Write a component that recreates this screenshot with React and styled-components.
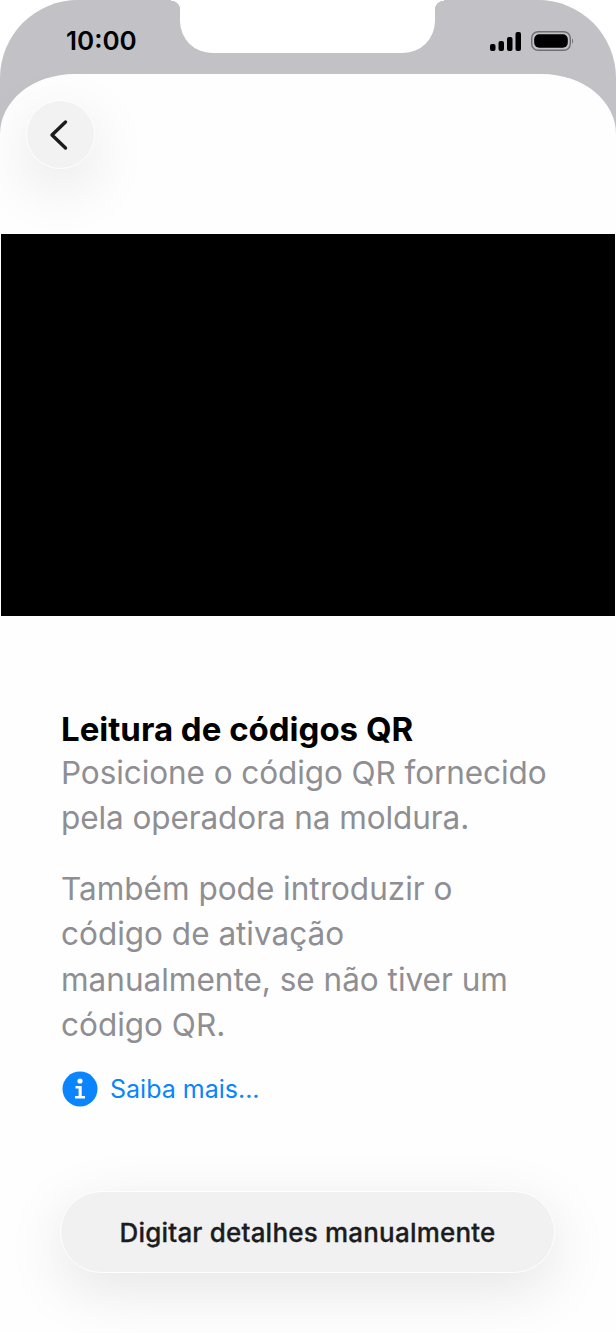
import React from 'react';
import styled, { createGlobalStyle } from 'styled-components';

const GlobalStyle = createGlobalStyle`
  html, body {
    margin: 0;
    padding: 0;
    background: #ffffff;
  }
  * {
    box-sizing: border-box;
  }
`;

const App = () => {
  return (
    <Phone>
      <GlobalStyle />
      <StatusBar>
        <Time>10:00</Time>
        <Notch />
        <StatusIcons>
          <svg width="31" height="19" viewBox="0 0 31 19">
            <rect x="0" y="12" width="5.5" height="7" rx="2" fill="#000" />
            <rect x="8.5" y="9" width="5.5" height="10" rx="2" fill="#000" />
            <rect x="17" y="5" width="5.5" height="14" rx="2" fill="#000" />
            <rect x="25.5" y="0" width="5.5" height="19" rx="2" fill="#000" />
          </svg>
          <svg width="44" height="20" viewBox="0 0 44 20">
            <rect x="0.7" y="0.7" width="38.6" height="18.6" rx="6.5" fill="none" stroke="#6f6f73" strokeWidth="1.4" />
            <rect x="3.2" y="3.2" width="33.6" height="13.6" rx="5" fill="#000" />
            <path d="M41 7.5c1.4.4 1.6 4.6 0 5z" fill="#77777b" />
          </svg>
        </StatusIcons>
      </StatusBar>
      <Sheet>
        <TopBar>
          <BackButton aria-label="Voltar">
            <svg width="20" height="32" viewBox="0 0 20 32" fill="none">
              <path d="M16.5 3 3 16l13.500 13" stroke="#1c1c1e" strokeWidth="3.4" strokeLinecap="round" strokeLinejoin="round" />
            </svg>
          </BackButton>
        </TopBar>
        <Camera />
        <Content>
          <Title>Leitura de códigos QR</Title>
          <Paragraph $tight>Posicione o código QR fornecido pela operadora na moldura.</Paragraph>
          <Paragraph $spaced>Também pode introduzir o código de ativação manualmente, se não tiver um código QR.</Paragraph>
          <LearnMore>
            <svg width="36" height="36" viewBox="0 0 36 36">
              <circle cx="18" cy="18" r="17.500" fill="#0a84ff" />
              <circle cx="18" cy="10" r="2.600" fill="#fff" />
              <path d="M13.5 15h6.200v10h3.300v2.600H13v-2.600h3.600v-7.400h-3.100z" fill="#fff" />
            </svg>
            <LearnMoreText>Saiba mais...</LearnMoreText>
          </LearnMore>
        </Content>
        <Footer>
          <ManualButton>Digitar detalhes manualmente</ManualButton>
        </Footer>
      </Sheet>
    </Phone>
  );
};

export default App;

const Phone = styled.div`
  position: relative;
  width: 616px;
  height: 1333px;
  display: flex;
  flex-direction: column;
  overflow: hidden;
  background: #c1c1c6;
  border-radius: 78px 78px 0 0;
  font-family: Inter, 'Liberation Sans', sans-serif;
`;

const StatusBar = styled.div`
  height: 74px;
  flex-shrink: 0;
  display: flex;
  justify-content: space-between;
  align-items: flex-start;
  padding: 27px 41px 0 66px;
`;

const Time = styled.span`
  font-size: 26px;
  line-height: 27px;
  font-weight: 600;
  color: #000;
`;

const Notch = styled.div`
  position: absolute;
  top: -1px;
  left: 180px;
  width: 255px;
  height: 54px;
  background: #ffffff;
  border-radius: 0 0 32px 32px;

  &::before,
  &::after {
    content: '';
    position: absolute;
    top: 0;
    width: 9px;
    height: 11px;
  }

  &::before {
    left: -9px;
    background: radial-gradient(circle at 0 100%, transparent 9px, #ffffff 9.5px);
  }

  &::after {
    right: -9px;
    background: radial-gradient(circle at 100% 100%, transparent 9px, #ffffff 9.5px);
  }
`;

const StatusIcons = styled.div`
  display: flex;
  align-items: center;
  gap: 10px;
  padding-top: 4px;
`;

const Sheet = styled.div`
  flex: 1;
  display: flex;
  flex-direction: column;
  background: #fefefe;
  border-radius: 74px 74px 0 0 / 60px 60px 0 0;
`;

const TopBar = styled.div`
  height: 160px;
  flex-shrink: 0;
  padding: 26px 0 0 26px;
`;

const BackButton = styled.button`
  width: 69px;
  height: 69px;
  display: flex;
  align-items: center;
  justify-content: center;
  padding: 0 4px 0 0;
  background: #f2f2f3;
  border: 1px solid #ffffff;
  border-radius: 50%;
  box-shadow: 0 18px 60px rgba(0, 0, 0, 0.1);
`;

const Camera = styled.div`
  height: 382px;
  flex-shrink: 0;
  margin: 0 1px;
  background: #000;
`;

const Content = styled.div`
  flex: 1;
  padding: 93px 0 0 61px;
`;

const Title = styled.h1`
  margin: 0 0 1px;
  font-size: 33px;
  line-height: 40px;
  font-weight: 700;
  color: #000;
`;

const Paragraph = styled.p`
  margin: ${(props) => (props.$spaced ? '25px' : '0')} 0 0;
  max-width: 488px;
  font-size: 31.5px;
  line-height: 45.4px;
  font-weight: 400;
  letter-spacing: ${(props) => (props.$tight ? '-0.08px' : '0')};
  color: #8e8e93;
`;

const LearnMore = styled.a`
  display: flex;
  align-items: center;
  gap: 12px;
  margin-top: 24px;
  padding-left: 1px;
`;

const LearnMoreText = styled.span`
  font-size: 25px;
  line-height: 36px;
  color: #0a84ff;
`;

const Footer = styled.div`
  padding: 0 61px 60px 60px;
`;

const ManualButton = styled.button`
  width: 100%;
  height: 82px;
  background: #f1f1f2;
  border: 1.5px solid #ffffff;
  border-radius: 41px;
  font-family: inherit;
  font-size: 26px;
  font-weight: 500;
  letter-spacing: 0.2px;
  -webkit-text-stroke: 0.3px #1c1c1e;
  color: #1c1c1e;
  box-shadow: 0 16px 60px rgba(0, 0, 0, 0.1);
`;
